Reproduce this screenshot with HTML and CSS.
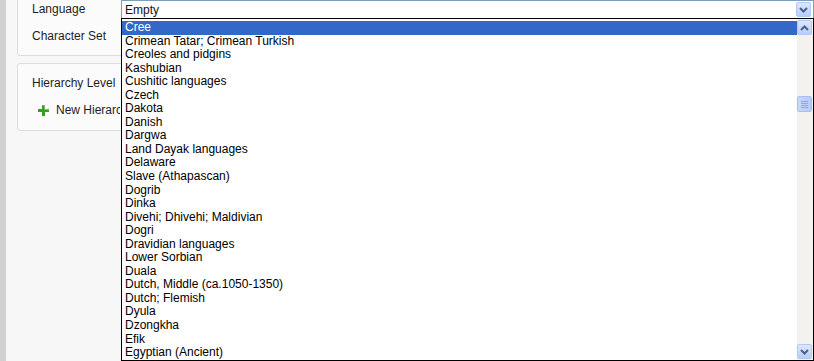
FILE: index.html
```html
<!DOCTYPE html>
<html>
<head>
<meta charset="utf-8">
<link rel="stylesheet" href="styles.css">
</head>
<body>
<div class="app">
  <div class="strip"></div>
  <div class="content">
    <div class="panel panel-top">
      <div class="row">Language</div>
      <div class="row">Character Set</div>
    </div>
    <div class="panel panel-hier">
      <div class="row">Hierarchy Level</div>
      <div class="row add">
        <svg class="plus" width="11" height="11" viewBox="0 0 11 11"><path d="M4 0h3v4h4v3H7v4H4V7H0V4h4z" fill="#3a9a2a"/><path d="M4.5 0.5h2v4h4v1" fill="none" stroke="#7fd06a" stroke-width="0.8"/></svg>
        <span class="add-label">New Hierarchy Level</span>
      </div>
    </div>
  </div>
  <div class="combo">
    <div class="combo-field">
      <span class="combo-value">Empty</span>
      <span class="combo-btn"><svg width="9" height="6" viewBox="0 0 9 6"><path d="M1 1l3.5 3.5L8 1" fill="none" stroke="#4d6185" stroke-width="2"/></svg></span>
    </div>
    <div class="list">
      <ul class="items">
        <li class="sel">Cree</li>
        <li>Crimean Tatar; Crimean Turkish</li>
        <li>Creoles and pidgins</li>
        <li>Kashubian</li>
        <li>Cushitic languages</li>
        <li>Czech</li>
        <li>Dakota</li>
        <li>Danish</li>
        <li>Dargwa</li>
        <li>Land Dayak languages</li>
        <li>Delaware</li>
        <li>Slave (Athapascan)</li>
        <li>Dogrib</li>
        <li>Dinka</li>
        <li>Divehi; Dhivehi; Maldivian</li>
        <li>Dogri</li>
        <li>Dravidian languages</li>
        <li>Lower Sorbian</li>
        <li>Duala</li>
        <li>Dutch, Middle (ca.1050-1350)</li>
        <li>Dutch; Flemish</li>
        <li>Dyula</li>
        <li>Dzongkha</li>
        <li>Efik</li>
        <li>Egyptian (Ancient)</li>
      </ul>
      <div class="scrollbar">
        <span class="sb-btn"><svg width="9" height="6" viewBox="0 0 9 6"><path d="M1 5l3.5-3.5L8 5" fill="none" stroke="#4d6185" stroke-width="2"/></svg></span>
        <div class="track">
          <span class="thumb"><i></i><i></i><i></i><i></i></span>
        </div>
        <span class="sb-btn"><svg width="9" height="6" viewBox="0 0 9 6"><path d="M1 1l3.5 3.5L8 1" fill="none" stroke="#4d6185" stroke-width="2"/></svg></span>
      </div>
    </div>
  </div>
</div>
</body>
</html>
```
FILE: styles.css
```css
html, body {
  margin: 0;
  padding: 0;
  width: 814px;
  height: 361px;
  overflow: hidden;
  background: #f7f7f7;
  font-family: "Liberation Sans", Arial, sans-serif;
  color: #1e1e1e;
}
.app {
  position: relative;
  display: flex;
  height: 361px;
}
.strip {
  width: 6px;
  background: #d0d0d0;
  flex: none;
}
.content {
  flex: 1;
  padding-left: 11px;
  display: flex;
  flex-direction: column;
  gap: 7px;
}
.panel {
  background: #fbfbfb;
  border: 1px solid #dcdcdc;
  border-radius: 3px;
  width: 760px;
  box-sizing: border-box;
}
.panel-top {
  margin-top: -10px;
  height: 66px;
  padding-top: 10px;
}
.panel-hier {
  height: 68px;
  padding-top: 11px;
}
.row {
  font-size: 12px;
  padding-left: 14px;
  height: 27px;
  line-height: 16px;
}
.add {
  display: flex;
  align-items: flex-start;
  padding-left: 20px;
  gap: 7px;
}
.add .plus { margin-top: 3px; flex: none; }
.add-label {
  display: block;
  width: 64px;
  overflow: hidden;
  white-space: nowrap;
}

.combo {
  position: absolute;
  left: 121px;
  top: 0;
  width: 693px;
  height: 361px;
  font-family: "Liberation Sans", Tahoma, sans-serif;
}
.combo-field {
  height: 18px;
  box-sizing: border-box;
  border: 1px solid #7f9db9;
  border-bottom: none;
  background: #fff;
  display: flex;
  align-items: center;
  justify-content: space-between;
}
.combo-value {
  font-size: 12px;
  padding-left: 3px;
  color: #111;
}
.combo-btn, .sb-btn {
  width: 15px;
  height: 15px;
  box-sizing: border-box;
  border: 1px solid #b4c8f6;
  border-radius: 2px;
  background: linear-gradient(#dde7fe, #b9cdfa);
  display: flex;
  align-items: center;
  justify-content: center;
  flex: none;
}
.combo-btn { margin-right: 2px; }
.list {
  height: 343px;
  box-sizing: border-box;
  border: 1px solid #000;
  background: #fff;
  display: flex;
}
.items {
  list-style: none;
  margin: 0;
  padding: 2px 0 0 0;
  flex: 1;
  font-size: 12px;
  color: #000;
}
.items li {
  height: 13.55px;
  line-height: 13.55px;
  padding-left: 3px;
  white-space: nowrap;
}
.items li.sel {
  background: #3468c8;
  color: #fff;
}
.scrollbar {
  width: 16px;
  background: #f3f2ec;
  display: flex;
  flex-direction: column;
  padding: 1px 0 1px 0;
  box-sizing: border-box;
}
.scrollbar .sb-btn { width: 15px; }
.track {
  flex: 1;
  position: relative;
}
.thumb {
  position: absolute;
  left: 0;
  top: 61px;
  width: 15px;
  height: 16px;
  box-sizing: border-box;
  border: 1px solid #a9bff4;
  border-radius: 2px;
  background: linear-gradient(90deg, #c9d8fc, #b6cafa);
  display: flex;
  flex-direction: column;
  align-items: center;
  justify-content: center;
  gap: 1px;
}
.thumb i {
  display: block;
  width: 7px;
  height: 1px;
  background: #8ea8e6;
}
```
